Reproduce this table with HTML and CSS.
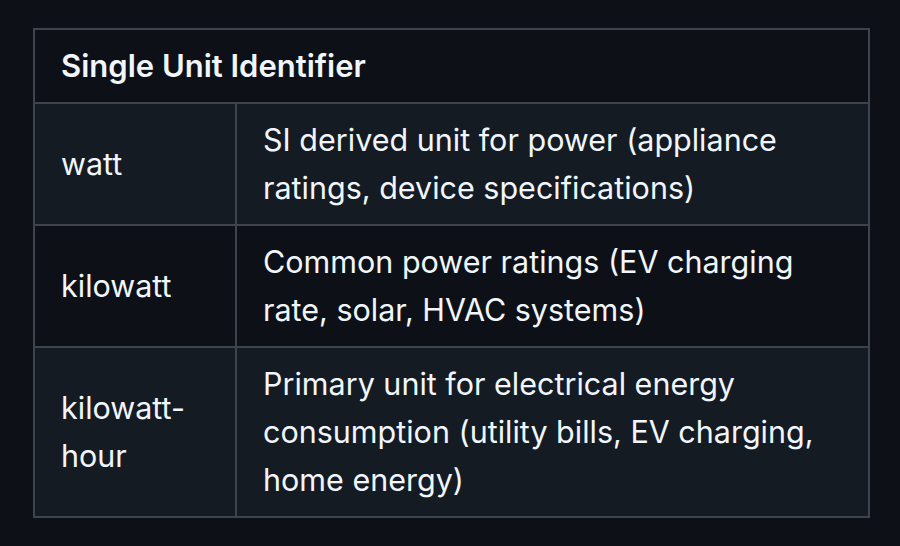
FILE: index.html
```html
<!DOCTYPE html>
<html>
<head>
<meta charset="utf-8">
<link rel="stylesheet" href="styles.css">
</head>
<body>
<div class="page">
  <table class="units">
    <thead>
      <tr><th colspan="2">Single Unit Identifier</th></tr>
    </thead>
    <tbody>
      <tr class="alt"><td class="name">watt</td><td>SI derived unit for power (appliance ratings, device specifications)</td></tr>
      <tr><td class="name">kilowatt</td><td>Common power ratings (EV charging rate, solar, HVAC systems)</td></tr>
      <tr class="alt"><td class="name">kilowatt-hour</td><td>Primary unit for electrical energy consumption (utility bills, EV charging, home energy)</td></tr>
    </tbody>
  </table>
</div>
</body>
</html>
```
FILE: styles.css
```css
html, body {
  margin: 0;
  padding: 0;
  background: #0d1117;
}
.page {
  padding: 28px 30px 0 33px;
}
.units {
  width: 837px;
  border-collapse: collapse;
  font-family: Inter, "Noto Sans", sans-serif;
  font-size: 30.5px;
  line-height: 48px;
  color: #f0f6fc;
}
.units th, .units td {
  border: 2px solid #3d444d;
  padding: 12px 26px;
  text-align: left;
  vertical-align: middle;
}
.units th {
  font-weight: 600;
  font-size: 31px;
}
.units td.name {
  width: 148px;
}
.units tr.alt {
  background: #151b23;
}
```
